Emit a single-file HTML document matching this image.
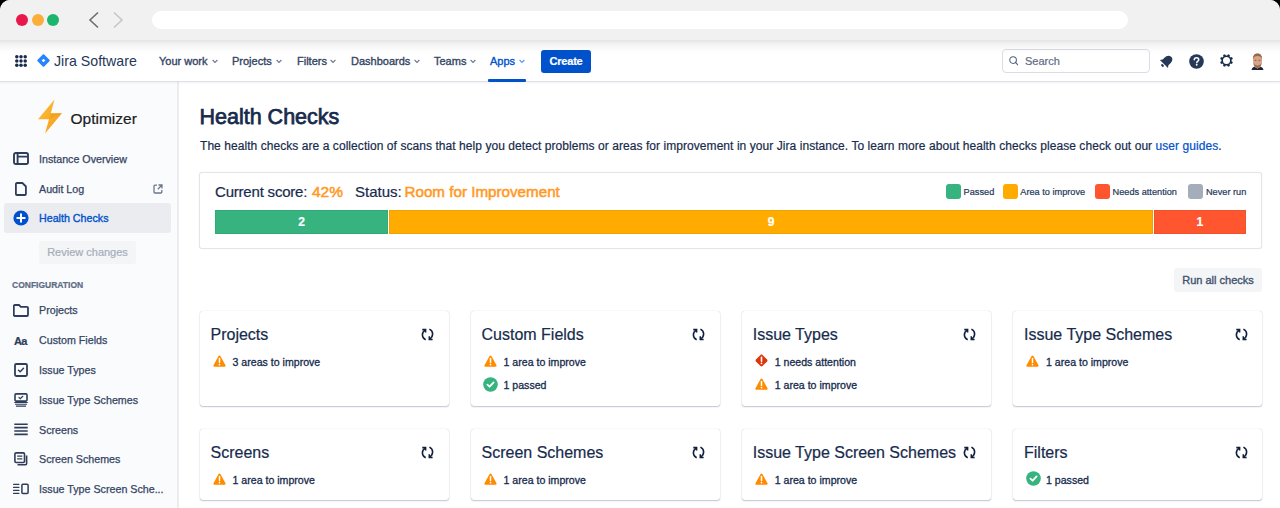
<!DOCTYPE html>
<html><head><meta charset="utf-8">
<style>
*{box-sizing:border-box}
html,body{margin:0;padding:0;background:#000;width:1280px;height:508px;overflow:hidden}
body{font-family:"Liberation Sans",sans-serif;color:#172B4D;-webkit-text-stroke:0.2px currentColor}
#win{position:absolute;left:0;top:0;width:1280px;height:508px;background:#fff;border-radius:10px 10px 0 0;overflow:hidden}
.abs{position:absolute}
#chrome{position:absolute;left:0;top:0;width:1280px;height:40px;background:#f1f1f1;z-index:3}
#shd{position:absolute;left:0;top:40px;width:1280px;height:15px;z-index:3;background:linear-gradient(rgba(0,10,10,0.11),rgba(0,0,0,0.045) 30%,rgba(0,0,0,0.012) 70%,rgba(0,0,0,0))}
.tl{position:absolute;top:14px;width:12px;height:12px;border-radius:50%}
#url{position:absolute;left:152px;top:11px;width:976px;height:18px;border-radius:9px;background:#fff}
#nav{position:absolute;left:0;top:40px;width:1280px;height:42px;background:#fff;border-bottom:1px solid #dfe1e6;box-shadow:0 1px 2px rgba(9,30,66,0.06);z-index:2}
.ni{position:absolute;top:15px;font-size:11px;font-weight:400;color:#344563;-webkit-text-stroke:0.35px currentColor;white-space:nowrap;line-height:12px}
.ni svg{position:absolute;top:4px}
#side{position:absolute;left:0;top:82px;width:179px;height:426px;background:#FAFBFC;border-right:2px solid #EBECF0}
.si{position:absolute;left:39px;font-size:10.7px;color:#344563;-webkit-text-stroke:0.25px currentColor;white-space:nowrap;line-height:12px}
.sic{position:absolute;left:13px}
#main{position:absolute;left:179px;top:83px;width:1101px;height:425px;background:#fff}
.card{position:absolute;width:249.2px;background:#fff;border-radius:3px;box-shadow:0 1px 1.5px rgba(9,30,66,0.24),0 0 1px rgba(9,30,66,0.26)}
.ct{position:absolute;left:11px;top:15.4px;font-size:16px;color:#172B4D;white-space:nowrap;line-height:18px}
.rf{position:absolute;right:14.5px;top:17.2px}
.row{position:absolute;left:33px;font-size:10.6px;-webkit-text-stroke:0.3px currentColor;color:#172B4D;white-space:nowrap;line-height:12px}
.row svg{position:absolute;left:-20px;top:-1px}
.ro svg{left:-20.5px;top:-2.5px}
.re svg{top:-1.5px}
.lg{position:absolute;top:184px;height:15px;padding-left:17.6px;font-size:9.2px;color:#253858;line-height:16.5px;white-space:nowrap}
.lg i{position:absolute;left:0;top:0;width:15px;height:15px;border-radius:3px}
.bar{position:absolute;top:209.5px;height:24.3px;box-shadow:inset 0 0 0 0.8px rgba(0,40,0,0.08);color:#fff;font-size:12px;font-weight:700;text-align:center;line-height:24px}
.sc{top:184px;font-size:15px;color:#172B4D;white-space:nowrap;line-height:16px}
</style></head><body>
<div id="win">
  <div id="chrome">
    <div class="tl" style="left:16px;background:#E8194A"></div>
    <div class="tl" style="left:32px;background:#FBAE3C"></div>
    <div class="tl" style="left:47px;background:#1DB56C"></div>
    <svg class="abs" style="left:88px;top:11px" width="12" height="18" viewBox="0 0 12 18"><path d="M10 1.5 L2 9 L10 16.5" fill="none" stroke="#6e6e6e" stroke-width="1.6"/></svg>
    <svg class="abs" style="left:112px;top:11px" width="12" height="18" viewBox="0 0 12 18"><path d="M2 1.5 L10 9 L2 16.5" fill="none" stroke="#c6c6c6" stroke-width="1.6"/></svg>
    <div id="url"></div>
  </div>

  <div id="shd"></div>
  <div id="nav">
    <svg class="abs" style="left:15px;top:15px" width="12" height="12" viewBox="0 0 12 12" fill="#172B4D"><circle cx="1.8" cy="1.8" r="1.75"/><circle cx="6" cy="1.8" r="1.75"/><circle cx="10.2" cy="1.8" r="1.75"/><circle cx="1.8" cy="6" r="1.75"/><circle cx="6" cy="6" r="1.75"/><circle cx="10.2" cy="6" r="1.75"/><circle cx="1.8" cy="10.2" r="1.75"/><circle cx="6" cy="10.2" r="1.75"/><circle cx="10.2" cy="10.2" r="1.75"/></svg>
    <svg class="abs" style="left:37px;top:14.3px" width="13" height="13" viewBox="0 0 13 13"><path d="M5.8 0.6 Q6.5 -0.1 7.2 0.6 L12.4 5.8 Q13.1 6.5 12.4 7.2 L7.2 12.4 Q6.5 13.1 5.8 12.4 L0.6 7.2 Q-0.1 6.5 0.6 5.8 Z" fill="#2684FF"/><path d="M6.5 4.7 L8.3 6.5 L6.5 8.3 L4.7 6.5 Z" fill="#fff"/></svg>
    <div class="abs" style="left:54px;top:13.2px;font-size:14.2px;color:#253858;white-space:nowrap;line-height:16px;letter-spacing:0;-webkit-text-stroke:0">Jira Software</div>
    <div class="ni" style="left:159px">Your work<svg style="left:53px" width="6" height="5" viewBox="0 0 6 5"><path d="M0.6 1 L3 3.4 L5.4 1" fill="none" stroke="#6B778C" stroke-width="1.1" style="-webkit-text-stroke:0"/></svg></div>
    <div class="ni" style="left:232px">Projects<svg style="left:44px" width="6" height="5" viewBox="0 0 6 5"><path d="M0.6 1 L3 3.4 L5.4 1" fill="none" stroke="#6B778C" stroke-width="1.1" style="-webkit-text-stroke:0"/></svg></div>
    <div class="ni" style="left:297px">Filters<svg style="left:32.8px" width="6" height="5" viewBox="0 0 6 5"><path d="M0.6 1 L3 3.4 L5.4 1" fill="none" stroke="#6B778C" stroke-width="1.1" style="-webkit-text-stroke:0"/></svg></div>
    <div class="ni" style="left:351px">Dashboards<svg style="left:62.6px" width="6" height="5" viewBox="0 0 6 5"><path d="M0.6 1 L3 3.4 L5.4 1" fill="none" stroke="#6B778C" stroke-width="1.1" style="-webkit-text-stroke:0"/></svg></div>
    <div class="ni" style="left:434px">Teams<svg style="left:35.5px" width="6" height="5" viewBox="0 0 6 5"><path d="M0.6 1 L3 3.4 L5.4 1" fill="none" stroke="#6B778C" stroke-width="1.1" style="-webkit-text-stroke:0"/></svg></div>
    <div class="ni" style="left:490px;color:#0052CC">Apps<svg style="left:28.9px" width="6" height="5" viewBox="0 0 6 5"><path d="M0.6 1 L3 3.4 L5.4 1" fill="none" stroke="#4C9AFF" stroke-width="1.1" style="-webkit-text-stroke:0"/></svg></div>
    <div class="abs" style="left:488px;top:39px;width:38px;height:3px;background:#0052CC;border-radius:1px"></div>
    <div class="abs" style="left:541px;top:10px;width:50px;height:23px;background:#0052CC;border-radius:3px;color:#fff;font-size:11px;font-weight:700;text-align:center;line-height:23px;letter-spacing:-0.2px">Create</div>
    <div class="abs" style="left:1001.8px;top:9.2px;width:148.2px;height:23.6px;border:1.5px solid #DADDE3;border-radius:4px;background:#fff"></div>
    <svg class="abs" style="left:1008.7px;top:16px" width="9.5" height="9.5" viewBox="0 0 10 10"><circle cx="4.3" cy="4.3" r="3.5" fill="none" stroke="#505F79" stroke-width="1.1"/><path d="M6.8 6.8 L9.3 9.3" stroke="#505F79" stroke-width="1.2" stroke-linecap="round"/></svg>
    <div class="abs" style="left:1025px;top:15px;font-size:11px;color:#5E6C84;line-height:12px">Search</div>
    <svg class="abs" style="left:1158px;top:13px" width="17" height="17" viewBox="0 0 16 16"><g transform="rotate(45 8 8)" fill="#253858"><path d="M8 1.8 C5.2 1.8 4.2 4 4.2 6.5 L4.2 9.3 L2.6 11.4 L13.4 11.4 L11.8 9.3 L11.8 6.5 C11.8 4 10.8 1.8 8 1.8 Z"/><ellipse cx="8" cy="13.3" rx="1.5" ry="1.1"/></g></svg>
    <svg class="abs" style="left:1189px;top:13.5px" width="15" height="15" viewBox="0 0 16 16"><circle cx="8" cy="8" r="7.8" fill="#253858"/><path d="M5.6 6.2 C5.6 4.7 6.7 3.9 8 3.9 C9.4 3.9 10.4 4.8 10.4 6 C10.4 7.5 8.6 7.7 8.3 9.2" fill="none" stroke="#fff" stroke-width="1.6" stroke-linecap="round"/><circle cx="8.2" cy="11.5" r="1" fill="#fff"/></svg>
    <svg class="abs" style="left:1219.5px;top:14.2px" width="13" height="13" viewBox="0 0 13 13"><path fill="#172B4D" fill-rule="evenodd" d="M11.54 7.28 L12.84 7.94 L12.00 9.97 L10.61 9.52 L9.52 10.61 L9.97 12.00 L7.94 12.84 L7.28 11.54 L5.72 11.54 L5.06 12.84 L3.03 12.00 L3.48 10.61 L2.39 9.52 L1.00 9.97 L0.16 7.94 L1.46 7.28 L1.46 5.72 L0.16 5.06 L1.00 3.03 L2.39 3.48 L3.48 2.39 L3.03 1.00 L5.06 0.16 L5.72 1.46 L7.28 1.46 L7.94 0.16 L9.97 1.00 L9.52 2.39 L10.61 3.48 L12.00 3.03 L12.84 5.06 L11.54 5.72 Z M6.5 3.0 A3.5 3.5 0 1 0 6.5 10.0 A3.5 3.5 0 1 0 6.5 3.0 Z"/></svg>
    <svg class="abs" style="left:1251px;top:13px" width="13" height="17" viewBox="0 0 13 17"><path d="M0.5 17 C1 15 2.5 14 4 13.6 L6.5 15.5 L9 13.6 C10.5 14 12 15 12.5 17 Z" fill="#1c2538"/><path d="M2 7 C1.8 2.8 3.6 0.8 6.5 0.8 C9.4 0.8 11.2 2.8 11 7 L10.8 10.5 C10.3 13.6 8.5 15.3 6.5 15.3 C4.5 15.3 2.7 13.6 2.2 10.5 Z" fill="#D8A488"/><path d="M2 6.2 C1.8 2.2 3.8 0.5 6.5 0.5 C9.2 0.5 11.2 2.2 11 6.2 C10.4 3.8 9 3 6.5 3 C4 3 2.6 3.8 2 6.2 Z" fill="#8f6a4c"/><path d="M2.4 9.8 C3 13.6 4.8 15.1 6.5 15.1 C8.2 15.1 10 13.6 10.6 9.8 C9.8 11.8 8.4 12.4 6.5 12.4 C4.6 12.4 3.2 11.8 2.4 9.8 Z" fill="#9a6a4e"/><path d="M3.6 7.3 H5.4 M7.6 7.3 H9.4" stroke="#5a3a2a" stroke-width="0.7"/></svg>
  </div>

  <div id="side">
    <svg class="abs" style="left:37px;top:17px" width="26" height="35" viewBox="0 0 26 35"><defs><linearGradient id="bg1" x1="0" y1="0" x2="1" y2="1"><stop offset="0" stop-color="#FFC23D"/><stop offset="1" stop-color="#F29A16"/></linearGradient></defs><path d="M17.5 0.5 L1 20.2 L12 20.2 L8 34.5 L25 14.2 L13.8 14.2 Z" fill="url(#bg1)"/><path d="M13.8 14.2 L25 14.2 L12 20.2 Z" fill="#E89B1C" opacity="0.55"/></svg>
    <div class="abs" style="left:70.5px;top:28px;font-size:15.5px;color:#202020;white-space:nowrap;line-height:18px">Optimizer</div>

    <svg class="sic" style="top:70px" width="16" height="13" viewBox="0 0 16 13"><rect x="1" y="1" width="14" height="11" rx="1.8" fill="none" stroke="#2E3D5A" stroke-width="1.9"/><path d="M4.6 1.5 V11.5 M4.6 4.6 H14.5" stroke="#2E3D5A" stroke-width="1.9"/></svg>
    <div class="si" style="top:70.5px">Instance Overview</div>

    <svg class="sic" style="left:15px;top:99.5px" width="12" height="14" viewBox="0 0 12 14"><path d="M1.9 1 H7.4 L10.9 4.5 V12 A1 1 0 0 1 9.9 13 H1.9 A1 1 0 0 1 0.9 12 V2 A1 1 0 0 1 1.9 1 Z" fill="none" stroke="#2E3D5A" stroke-width="1.8" stroke-linejoin="round"/></svg>
    <div class="si" style="top:100.5px">Audit Log</div>
    <svg class="abs" style="left:153px;top:101.5px" width="10" height="10" viewBox="0 0 10 10"><path d="M4 1.2 H2 A1 1 0 0 0 1 2.2 V8 A1 1 0 0 0 2 9 H7.8 A1 1 0 0 0 8.8 8 V6" fill="none" stroke="#6B778C" stroke-width="1.3"/><path d="M5.5 1 H9 V4.5 M9 1 L4.8 5.2" fill="none" stroke="#6B778C" stroke-width="1.3"/></svg>

    <div class="abs" style="left:4px;top:121px;width:167px;height:30px;background:#EBECF0;border-radius:3px"></div>
    <svg class="sic" style="top:127.5px" width="16" height="16" viewBox="0 0 16 16"><circle cx="8" cy="8" r="7.6" fill="#0052CC"/><path d="M8 4.3 V11.7 M4.3 8 H11.7" stroke="#fff" stroke-width="2" stroke-linecap="round"/></svg>
    <div class="si" style="top:130px;color:#0052CC;-webkit-text-stroke:0.35px currentColor">Health Checks</div>

    <div class="abs" style="left:39px;top:158.5px;width:97px;height:23px;background:#F4F5F7;border-radius:3px;color:#A5ADBA;font-size:11px;line-height:23px;text-align:center;white-space:nowrap">Review changes</div>

    <div class="abs" style="left:12px;top:197.5px;font-size:8.5px;font-weight:700;color:#5E6C84;white-space:nowrap;line-height:10px">CONFIGURATION</div>

    <svg class="sic" style="top:222px" width="16" height="13" viewBox="0 0 16 13"><path d="M1.8 1 H6 L7.8 2.8 H14 A1 1 0 0 1 15 3.8 V11 A1 1 0 0 1 14 12 H1.8 A1 1 0 0 1 0.8 11 V2 A1 1 0 0 1 1.8 1 Z" fill="none" stroke="#2E3D5A" stroke-width="1.8" stroke-linejoin="round"/></svg>
    <div class="si" style="top:222.2px">Projects</div>

    <div class="abs" style="left:14px;top:253px;font-size:11px;font-weight:700;color:#2E3D5A;line-height:12px;letter-spacing:-0.6px">Aa</div>
    <div class="si" style="top:252.2px">Custom Fields</div>

    <svg class="sic" style="left:14px;top:281px" width="14" height="14" viewBox="0 0 14 14"><rect x="1" y="1" width="12" height="12" rx="1.2" fill="none" stroke="#2E3D5A" stroke-width="1.8"/><path d="M4.5 7.2 L6.2 8.8 L9.5 5.3" fill="none" stroke="#2E3D5A" stroke-width="1.5" stroke-linecap="round" stroke-linejoin="round"/></svg>
    <div class="si" style="top:282px">Issue Types</div>

    <svg class="sic" style="left:14px;top:311px" width="14" height="14" viewBox="0 0 14 14"><rect x="1" y="0.9" width="12" height="7.2" rx="1" fill="none" stroke="#2E3D5A" stroke-width="1.6"/><path d="M5 4.5 L6.3 5.6 L8.8 3.3" fill="none" stroke="#2E3D5A" stroke-width="1.2" stroke-linecap="round"/><path d="M0.3 9.5 H13.7 M1 11.3 H13 M2 13.1 H12" stroke="#2E3D5A" stroke-width="1.1"/></svg>
    <div class="si" style="top:311.8px">Issue Type Schemes</div>

    <svg class="sic" style="left:14px;top:341px" width="14" height="13" viewBox="0 0 14 13"><path d="M0.3 1.2 H13.7 M0.3 4.6 H13.7 M0.3 8 H13.7 M0.3 11.4 H13.7" stroke="#2E3D5A" stroke-width="1.6"/></svg>
    <div class="si" style="top:341.5px">Screens</div>

    <svg class="sic" style="left:14px;top:370px" width="14" height="14" viewBox="0 0 14 14"><rect x="0.9" y="0.9" width="9.6" height="9.6" rx="1.2" fill="none" stroke="#2E3D5A" stroke-width="1.6"/><path d="M3.2 4.2 H8.3 M3.2 6.8 H8.3" stroke="#2E3D5A" stroke-width="1.3"/><path d="M12.6 3.5 V11.8 A1 1 0 0 1 11.6 12.8 H3.5" fill="none" stroke="#2E3D5A" stroke-width="1.6"/></svg>
    <div class="si" style="top:371.2px">Screen Schemes</div>

    <svg class="sic" style="left:13px;top:401px" width="16" height="12" viewBox="0 0 16 12"><path d="M0.6 1.3 H5.9 M0.6 4.4 H5.9 M0.6 7.4 H5.9 M0.6 10.4 H5.9" stroke="#2E3D5A" stroke-width="1.3" stroke-linecap="round"/><rect x="8.9" y="1.2" width="6.2" height="9.3" rx="1" fill="none" stroke="#2E3D5A" stroke-width="1.5"/></svg>
    <div class="si" style="top:401px">Issue Type Screen Sche...</div>
  </div>

  <div id="main"></div>
  <div class="abs" style="left:199.5px;top:105.2px;font-size:21.5px;font-weight:400;-webkit-text-stroke:0.75px currentColor;color:#172B4D;letter-spacing:0;white-space:nowrap;line-height:24px">Health Checks</div>
  <div class="abs" style="left:200px;top:139px;font-size:12px;color:#172B4D;letter-spacing:0.06px;white-space:nowrap;line-height:14px">The health checks are a collection of scans that help you detect problems or areas for improvement in your Jira instance. To learn more about health checks please check out our <span style="color:#0052CC">user guides</span>.</div>

  <div class="abs" style="left:199px;top:172.4px;width:1062.8px;height:76.6px;border:1px solid #E2E5E9;border-radius:3px;background:#fff;box-shadow:0 0 1px rgba(9,30,66,0.12)"></div>
  <div class="abs sc" style="left:215px;letter-spacing:-0.2px">Current score:</div><div class="abs sc" style="left:312px;color:#FF991F;font-size:15.5px;-webkit-text-stroke:0.5px currentColor">42%</div><div class="abs sc" style="left:355px">Status:</div><div class="abs sc" style="left:404.5px;color:#FF991F;font-size:15.2px;-webkit-text-stroke:0.5px currentColor">Room for Improvement</div>

  <div class="lg" style="left:946px"><i style="background:#36B37E"></i>Passed</div>
  <div class="lg" style="left:1002.7px"><i style="background:#FFAB00"></i>Area to improve</div>
  <div class="lg" style="left:1095px"><i style="background:#FF5630"></i>Needs attention</div>
  <div class="lg" style="left:1188.4px"><i style="background:#A5ADBA"></i>Never run</div>

  <div class="bar" style="left:215.2px;width:173px;background:#36B37E">2</div>
  <div class="bar" style="left:389.1px;width:763.9px;background:#FFAB00">9</div>
  <div class="bar" style="left:1154.1px;width:91.5px;background:#FF5630">1</div>

  <div class="abs" style="left:1174px;top:268.4px;width:88px;height:23.3px;background:#F4F5F7;border-radius:3px;color:#42526E;font-size:11px;line-height:25px;-webkit-text-stroke:0.35px currentColor;text-align:center;white-space:nowrap">Run all checks</div>
<div class="card" style="left:199.5px;top:310.5px;height:95.7px"><div class="ct">Projects</div><svg class="rf" width="13" height="13" viewBox="0 0 13 13"><g fill="none" stroke="#0F1F3D" stroke-width="1.55"><path d="M4.4 2.1 A5.3 5.3 0 0 0 4.7 11.8"/><path d="M8.4 1.1 A5.3 5.3 0 0 1 8.3 10.9"/><path d="M1.3 1.6 H4.6 V4.6"/><path d="M8.3 8.3 V11.5 H11.6"/></g></svg><div class="row rw" style="top:45px"><svg width="13" height="12" viewBox="0 0 13 12"><path d="M5.6 1 C6 0.3 7 0.3 7.4 1 L12.5 10.3 C12.9 11 12.4 11.8 11.6 11.8 H1.4 C0.6 11.8 0.1 11 0.5 10.3 Z" fill="#FF8B00"/><path d="M6.5 3.6 V7.6" stroke="#fff" stroke-width="1.5" stroke-linecap="round"/><circle cx="6.5" cy="9.6" r="0.85" fill="#fff"/></svg>3 areas to improve</div></div>
<div class="card" style="left:470.5px;top:310.5px;height:95.7px"><div class="ct">Custom Fields</div><svg class="rf" width="13" height="13" viewBox="0 0 13 13"><g fill="none" stroke="#0F1F3D" stroke-width="1.55"><path d="M4.4 2.1 A5.3 5.3 0 0 0 4.7 11.8"/><path d="M8.4 1.1 A5.3 5.3 0 0 1 8.3 10.9"/><path d="M1.3 1.6 H4.6 V4.6"/><path d="M8.3 8.3 V11.5 H11.6"/></g></svg><div class="row rw" style="top:45px"><svg width="13" height="12" viewBox="0 0 13 12"><path d="M5.6 1 C6 0.3 7 0.3 7.4 1 L12.5 10.3 C12.9 11 12.4 11.8 11.6 11.8 H1.4 C0.6 11.8 0.1 11 0.5 10.3 Z" fill="#FF8B00"/><path d="M6.5 3.6 V7.6" stroke="#fff" stroke-width="1.5" stroke-linecap="round"/><circle cx="6.5" cy="9.6" r="0.85" fill="#fff"/></svg>1 area to improve</div><div class="row ro" style="top:68.7px"><svg width="15" height="15" viewBox="0 0 15 15"><circle cx="7.5" cy="7.5" r="7.3" fill="#36B37E"/><path d="M4.4 7.7 L6.6 9.7 L10.6 5.4" fill="none" stroke="#fff" stroke-width="1.8" stroke-linecap="round" stroke-linejoin="round"/></svg>1 passed</div></div>
<div class="card" style="left:741.7px;top:310.5px;height:95.7px"><div class="ct">Issue Types</div><svg class="rf" width="13" height="13" viewBox="0 0 13 13"><g fill="none" stroke="#0F1F3D" stroke-width="1.55"><path d="M4.4 2.1 A5.3 5.3 0 0 0 4.7 11.8"/><path d="M8.4 1.1 A5.3 5.3 0 0 1 8.3 10.9"/><path d="M1.3 1.6 H4.6 V4.6"/><path d="M8.3 8.3 V11.5 H11.6"/></g></svg><div class="row re" style="top:45px"><svg width="13" height="13" viewBox="0 0 13 13"><path d="M5.5 0.9 C6 0.4 7 0.4 7.5 0.9 L12.1 5.5 C12.6 6 12.6 7 12.1 7.5 L7.5 12.1 C7 12.6 6 12.6 5.5 12.1 L0.9 7.5 C0.4 7 0.4 6 0.9 5.5 Z" fill="#DE350B"/><path d="M6.5 3.4 V7.2" stroke="#fff" stroke-width="1.6" stroke-linecap="round"/><circle cx="6.5" cy="9.3" r="0.9" fill="#fff"/></svg>1 needs attention</div><div class="row rw" style="top:68.7px"><svg width="13" height="12" viewBox="0 0 13 12"><path d="M5.6 1 C6 0.3 7 0.3 7.4 1 L12.5 10.3 C12.9 11 12.4 11.8 11.6 11.8 H1.4 C0.6 11.8 0.1 11 0.5 10.3 Z" fill="#FF8B00"/><path d="M6.5 3.6 V7.6" stroke="#fff" stroke-width="1.5" stroke-linecap="round"/><circle cx="6.5" cy="9.6" r="0.85" fill="#fff"/></svg>1 area to improve</div></div>
<div class="card" style="left:1013px;top:310.5px;height:95.7px"><div class="ct">Issue Type Schemes</div><svg class="rf" width="13" height="13" viewBox="0 0 13 13"><g fill="none" stroke="#0F1F3D" stroke-width="1.55"><path d="M4.4 2.1 A5.3 5.3 0 0 0 4.7 11.8"/><path d="M8.4 1.1 A5.3 5.3 0 0 1 8.3 10.9"/><path d="M1.3 1.6 H4.6 V4.6"/><path d="M8.3 8.3 V11.5 H11.6"/></g></svg><div class="row rw" style="top:45px"><svg width="13" height="12" viewBox="0 0 13 12"><path d="M5.6 1 C6 0.3 7 0.3 7.4 1 L12.5 10.3 C12.9 11 12.4 11.8 11.6 11.8 H1.4 C0.6 11.8 0.1 11 0.5 10.3 Z" fill="#FF8B00"/><path d="M6.5 3.6 V7.6" stroke="#fff" stroke-width="1.5" stroke-linecap="round"/><circle cx="6.5" cy="9.6" r="0.85" fill="#fff"/></svg>1 area to improve</div></div>
<div class="card" style="left:199.5px;top:428.7px;height:71.8px"><div class="ct">Screens</div><svg class="rf" width="13" height="13" viewBox="0 0 13 13"><g fill="none" stroke="#0F1F3D" stroke-width="1.55"><path d="M4.4 2.1 A5.3 5.3 0 0 0 4.7 11.8"/><path d="M8.4 1.1 A5.3 5.3 0 0 1 8.3 10.9"/><path d="M1.3 1.6 H4.6 V4.6"/><path d="M8.3 8.3 V11.5 H11.6"/></g></svg><div class="row rw" style="top:45px"><svg width="13" height="12" viewBox="0 0 13 12"><path d="M5.6 1 C6 0.3 7 0.3 7.4 1 L12.5 10.3 C12.9 11 12.4 11.8 11.6 11.8 H1.4 C0.6 11.8 0.1 11 0.5 10.3 Z" fill="#FF8B00"/><path d="M6.5 3.6 V7.6" stroke="#fff" stroke-width="1.5" stroke-linecap="round"/><circle cx="6.5" cy="9.6" r="0.85" fill="#fff"/></svg>1 area to improve</div></div>
<div class="card" style="left:470.5px;top:428.7px;height:71.8px"><div class="ct">Screen Schemes</div><svg class="rf" width="13" height="13" viewBox="0 0 13 13"><g fill="none" stroke="#0F1F3D" stroke-width="1.55"><path d="M4.4 2.1 A5.3 5.3 0 0 0 4.7 11.8"/><path d="M8.4 1.1 A5.3 5.3 0 0 1 8.3 10.9"/><path d="M1.3 1.6 H4.6 V4.6"/><path d="M8.3 8.3 V11.5 H11.6"/></g></svg><div class="row rw" style="top:45px"><svg width="13" height="12" viewBox="0 0 13 12"><path d="M5.6 1 C6 0.3 7 0.3 7.4 1 L12.5 10.3 C12.9 11 12.4 11.8 11.6 11.8 H1.4 C0.6 11.8 0.1 11 0.5 10.3 Z" fill="#FF8B00"/><path d="M6.5 3.6 V7.6" stroke="#fff" stroke-width="1.5" stroke-linecap="round"/><circle cx="6.5" cy="9.6" r="0.85" fill="#fff"/></svg>1 area to improve</div></div>
<div class="card" style="left:741.7px;top:428.7px;height:71.8px"><div class="ct">Issue Type Screen Schemes</div><svg class="rf" width="13" height="13" viewBox="0 0 13 13"><g fill="none" stroke="#0F1F3D" stroke-width="1.55"><path d="M4.4 2.1 A5.3 5.3 0 0 0 4.7 11.8"/><path d="M8.4 1.1 A5.3 5.3 0 0 1 8.3 10.9"/><path d="M1.3 1.6 H4.6 V4.6"/><path d="M8.3 8.3 V11.5 H11.6"/></g></svg><div class="row rw" style="top:45px"><svg width="13" height="12" viewBox="0 0 13 12"><path d="M5.6 1 C6 0.3 7 0.3 7.4 1 L12.5 10.3 C12.9 11 12.4 11.8 11.6 11.8 H1.4 C0.6 11.8 0.1 11 0.5 10.3 Z" fill="#FF8B00"/><path d="M6.5 3.6 V7.6" stroke="#fff" stroke-width="1.5" stroke-linecap="round"/><circle cx="6.5" cy="9.6" r="0.85" fill="#fff"/></svg>1 area to improve</div></div>
<div class="card" style="left:1013px;top:428.7px;height:71.8px"><div class="ct">Filters</div><svg class="rf" width="13" height="13" viewBox="0 0 13 13"><g fill="none" stroke="#0F1F3D" stroke-width="1.55"><path d="M4.4 2.1 A5.3 5.3 0 0 0 4.7 11.8"/><path d="M8.4 1.1 A5.3 5.3 0 0 1 8.3 10.9"/><path d="M1.3 1.6 H4.6 V4.6"/><path d="M8.3 8.3 V11.5 H11.6"/></g></svg><div class="row ro" style="top:45px"><svg width="15" height="15" viewBox="0 0 15 15"><circle cx="7.5" cy="7.5" r="7.3" fill="#36B37E"/><path d="M4.4 7.7 L6.6 9.7 L10.6 5.4" fill="none" stroke="#fff" stroke-width="1.8" stroke-linecap="round" stroke-linejoin="round"/></svg>1 passed</div></div>

</div>
</body></html>
